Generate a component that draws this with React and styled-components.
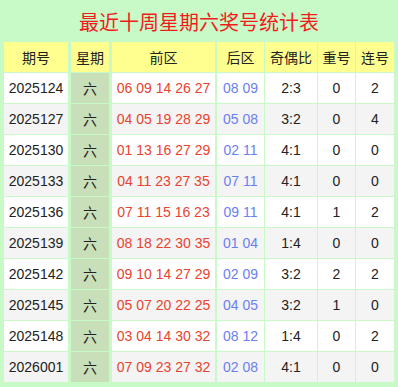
import React from "react";
import styled, { createGlobalStyle } from "styled-components";

const Global = createGlobalStyle`
  html, body { margin: 0; padding: 0; background: #c8fac8; }
  body { font-family: "Liberation Sans", "Noto Sans CJK SC", sans-serif; }
`;

const Wrapper = styled.div`
  width: 398px;
  height: 387px;
  box-sizing: border-box;
  background: #c8fac8;
  padding: 0 3px 0 3px;
  overflow: hidden;
`;

const Title = styled.div`
  height: 41px;
  display: flex;
  align-items: center;
  justify-content: center;
  color: #f01c1c;
  font-size: 20px;
  font-family: "Noto Sans CJK SC", sans-serif;
  padding-top: 1px;
  box-sizing: border-box;
`;

const Table = styled.table`
  width: 392px;
  border-collapse: separate;
  border-spacing: 1px 1px;
  table-layout: fixed;
`;

const Head = styled.th`
  height: 30px;
  padding: 0;
  box-sizing: border-box;
  background: #ffff90;
  background-clip: padding-box;
  border-left: ${(p) => p.$gap || 0}px solid #c8fac8;
  font-weight: normal;
  font-size: 14px;
  color: #222;
  font-family: "Noto Sans CJK SC", sans-serif;
  width: ${(p) => p.$w}px;
  text-align: center;
`;

const Cell = styled.td`
  height: 30px;
  padding: 0;
  box-sizing: border-box;
  background: ${(p) => (p.$week ? "#c9dfba" : p.$alt ? "#f4f4f4" : "#ffffff")};
  background-clip: padding-box;
  border-left: ${(p) => p.$gap || 0}px solid #c8fac8;
  font-size: 14px;
  text-align: center;
  white-space: nowrap;
  color: ${(p) => p.$color || "#222"};
  font-family: ${(p) =>
    p.$week ? `"Noto Sans CJK SC", sans-serif` : `"Liberation Sans", "Noto Sans CJK SC", sans-serif`};
`;

const rows = [
  ["2025124", "06 09 14 26 27", "08 09", "2:3", "0", "2"],
  ["2025127", "04 05 19 28 29", "05 08", "3:2", "0", "4"],
  ["2025130", "01 13 16 27 29", "02 11", "4:1", "0", "0"],
  ["2025133", "04 11 23 27 35", "07 11", "4:1", "0", "0"],
  ["2025136", "07 11 15 16 23", "09 11", "4:1", "1", "2"],
  ["2025139", "08 18 22 30 35", "01 04", "1:4", "0", "0"],
  ["2025142", "09 10 14 27 29", "02 09", "3:2", "2", "2"],
  ["2025145", "05 07 20 22 25", "04 05", "3:2", "1", "0"],
  ["2025148", "03 04 14 30 32", "08 12", "1:4", "0", "2"],
  ["2026001", "07 09 23 27 32", "02 08", "4:1", "0", "0"],
];

export default function App() {
  return (
    <Wrapper>
      <Global />
      <Title>最近十周星期六奖号统计表</Title>
      <Table>
        <thead>
          <tr>
            <Head $w={64}>期号</Head>
            <Head $w={40} $gap={2}>星期</Head>
            <Head $w={105} $gap={2}>前区</Head>
            <Head $w={48} $gap={1}>后区</Head>
            <Head $w={52}>奇偶比</Head>
            <Head $w={37}>重号</Head>
            <Head $w={38}>连号</Head>
          </tr>
        </thead>
        <tbody>
          {rows.map((r, i) => {
            const alt = i % 2 === 1;
            return (
              <tr key={r[0]}>
                <Cell $alt={alt}>{r[0]}</Cell>
                <Cell $week $gap={2}>六</Cell>
                <Cell $alt={alt} $gap={2} $color="#e8432f">{r[1]}</Cell>
                <Cell $alt={alt} $gap={1} $color="#6b7ff0">{r[2]}</Cell>
                <Cell $alt={alt}>{r[3]}</Cell>
                <Cell $alt={alt}>{r[4]}</Cell>
                <Cell $alt={alt}>{r[5]}</Cell>
              </tr>
            );
          })}
        </tbody>
      </Table>
    </Wrapper>
  );
}
